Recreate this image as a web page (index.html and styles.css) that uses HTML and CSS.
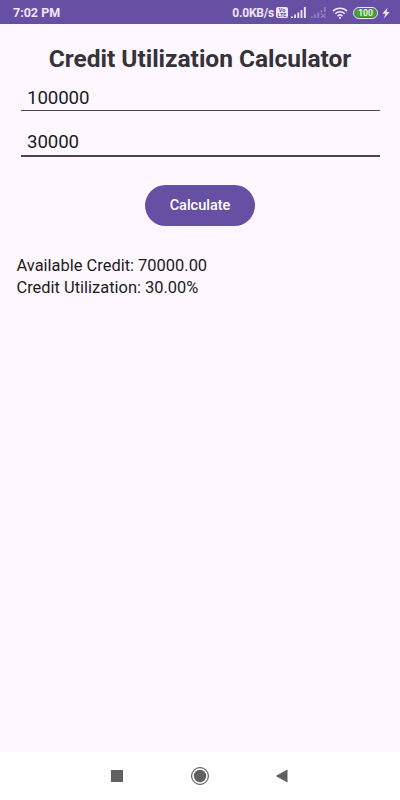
FILE: index.html
```html
<!DOCTYPE html>
<html lang="en">
<head>
    <meta charset="UTF-8">
    <meta name="viewport" content="width=device-width, initial-scale=1.0">
    <title>Credit Utilization Calculator</title>
    <link rel="stylesheet" href="styles.css">
</head>
<body>
    <div class="status-bar">
        <span class="time">7:02 PM</span>
        <div class="status-icons">
            <span class="speed">0.0KB/s</span>
            <span class="volte"><span>Vo</span><span>LTE</span></span>
            <svg class="signal" width="15" height="11" viewBox="0 0 15 11">
                <path d="M0 9.4h2V11H0zM3.2 7.6h1.8V11H3.2zM6.4 5.5h1.8V11H6.4zM9.6 3h1.8v8H9.6zM12.9 0h1.9v11h-1.9z"/>
            </svg>
            <svg class="no-signal" width="16" height="11" viewBox="0 0 16 11">
                <path d="M0 9.4h2V11H0zM3.2 7.6h1.8V11H3.2zM6.4 5.5h1.8V11H6.4zM9.6 3h1.6v2.5H9.6zM12.9 0h1.8v5h-1.8z"/>
                <path class="cross" d="M10 6.6l4.4 4.2M14.4 6.6L10 10.8"/>
            </svg>
            <svg class="wifi" width="16" height="12" viewBox="0 0 16 12">
                <path d="M.8 4.3a10.2 10.2 0 0 1 14.4 0M3.2 6.8a6.8 6.8 0 0 1 9.6 0M5.6 9.1a3.4 3.4 0 0 1 4.8 0"/>
                <circle cx="8" cy="10.8" r="1.1"/>
            </svg>
            <span class="battery">100</span>
            <svg class="bolt" width="8" height="12" viewBox="0 0 8 12">
                <path d="M5.6 .5L.4 6.7h3L2 11.5l5.6-6.4H4.5z"/>
            </svg>
        </div>
    </div>

    <main class="calculator">
        <h1>Credit Utilization Calculator</h1>
        <input type="text" id="credit-limit" value="100000" aria-label="Credit limit">
        <input type="text" id="credit-used" class="focused" value="30000" aria-label="Credit used">
        <button id="calculate-btn">Calculate</button>
        <div class="results" id="results">
            <div>Available Credit: <span id="available">70000.00</span></div>
            <div>Credit Utilization: <span id="utilization">30.00%</span></div>
        </div>
    </main>

    <div class="nav-bar">
        <svg width="20" height="20" viewBox="0 0 20 20">
            <rect x="4" y="4" width="12" height="12"/>
        </svg>
        <svg width="20" height="20" viewBox="0 0 20 20">
            <circle class="ring" cx="10" cy="10" r="8.4"/>
            <circle cx="10" cy="10" r="6.2"/>
        </svg>
        <svg width="20" height="20" viewBox="0 0 20 20">
            <path d="M2.7 10L14.5 3.4v13.2z"/>
        </svg>
    </div>

    <script>
        document.getElementById('calculate-btn').addEventListener('click', function() {
            const limit = parseFloat(document.getElementById('credit-limit').value);
            const used = parseFloat(document.getElementById('credit-used').value);

            if (isNaN(limit) || isNaN(used) || limit <= 0) {
                return;
            }

            document.getElementById('available').textContent = (limit - used).toFixed(2);
            document.getElementById('utilization').textContent = (used / limit * 100).toFixed(2) + '%';
        });
    </script>
</body>
</html>
```
FILE: styles.css
```css
* {
    box-sizing: border-box;
}

body {
    margin: 0;
    height: 100vh;
    display: flex;
    flex-direction: column;
    overflow: hidden;
    font-family: Roboto, sans-serif;
    color: #1d1b20;
    background-color: #fef7ff;
}

.status-bar {
    display: flex;
    justify-content: space-between;
    align-items: center;
    height: 24px;
    padding: 1px 10px 0 13px;
    background-color: #6750a4;
    color: #eee6fa;
    font-size: 12px;
    font-weight: bold;
}

.time {
    font-size: 12.5px;
}

.speed {
    font-size: 12px;
    letter-spacing: -0.2px;
}

.status-icons {
    display: flex;
    align-items: center;
}

.status-icons svg {
    fill: #eee6fa;
}

.volte {
    display: flex;
    flex-direction: column;
    align-items: center;
    justify-content: center;
    width: 12px;
    height: 11px;
    margin: 0 3px 0 2px;
    border-radius: 2px;
    background-color: #eee6fa;
    color: #6750a4;
    font-size: 5.5px;
    line-height: 5px;
}

.status-icons .no-signal {
    margin-left: 5px;
    fill: #9484c2;
}

.cross {
    stroke: #9484c2;
    stroke-width: 1.2;
}

.wifi {
    margin-left: 5px;
}

.wifi path {
    fill: none;
    stroke: #eee6fa;
    stroke-width: 1.5;
}

.battery {
    width: 25px;
    height: 12px;
    margin: 0 4px 0 5px;
    border: 1px solid #eee6fa;
    border-radius: 6px;
    background-color: #43a536;
    box-shadow: inset 0 0 0 1px #6750a4;
    color: #fff;
    font-size: 8.5px;
    font-weight: 500;
    line-height: 10px;
    text-align: center;
}

.calculator {
    flex: 1;
    display: flex;
    flex-direction: column;
    padding: 18px 16px 0;
}

h1 {
    margin: 0;
    color: #35323a;
    font-size: 24.5px;
    line-height: 33px;
    letter-spacing: -0.02px;
    text-align: center;
    white-space: nowrap;
}

input {
    height: 36px;
    margin: 0 4px 0 5px;
    padding: 10px 6px 0;
    border: none;
    border-bottom: 1px solid #49454f;
    border-radius: 0;
    background: none;
    color: #1d1b20;
    font-family: inherit;
    font-size: 18.7px;
    letter-spacing: -0.1px;
    outline: none;
}

input.focused {
    height: 38px;
    margin-top: 8px;
    border-bottom-width: 2px;
}

button {
    align-self: center;
    width: 110px;
    height: 41px;
    margin-top: 28px;
    padding: 0;
    border: none;
    border-radius: 21px;
    background-color: #6750a4;
    color: #fff;
    font-family: inherit;
    font-size: 14.5px;
    font-weight: 500;
    cursor: pointer;
}

.results {
    margin-top: 29px;
    padding-left: 0.5px;
    font-size: 16.45px;
    line-height: 22px;
}

.nav-bar {
    display: flex;
    justify-content: center;
    align-items: center;
    gap: 63px;
    height: 48px;
    background-color: #fff;
}

.nav-bar svg {
    fill: #616161;
}

.nav-bar .ring {
    fill: none;
    stroke: #424242;
    stroke-width: 1;
}
```
